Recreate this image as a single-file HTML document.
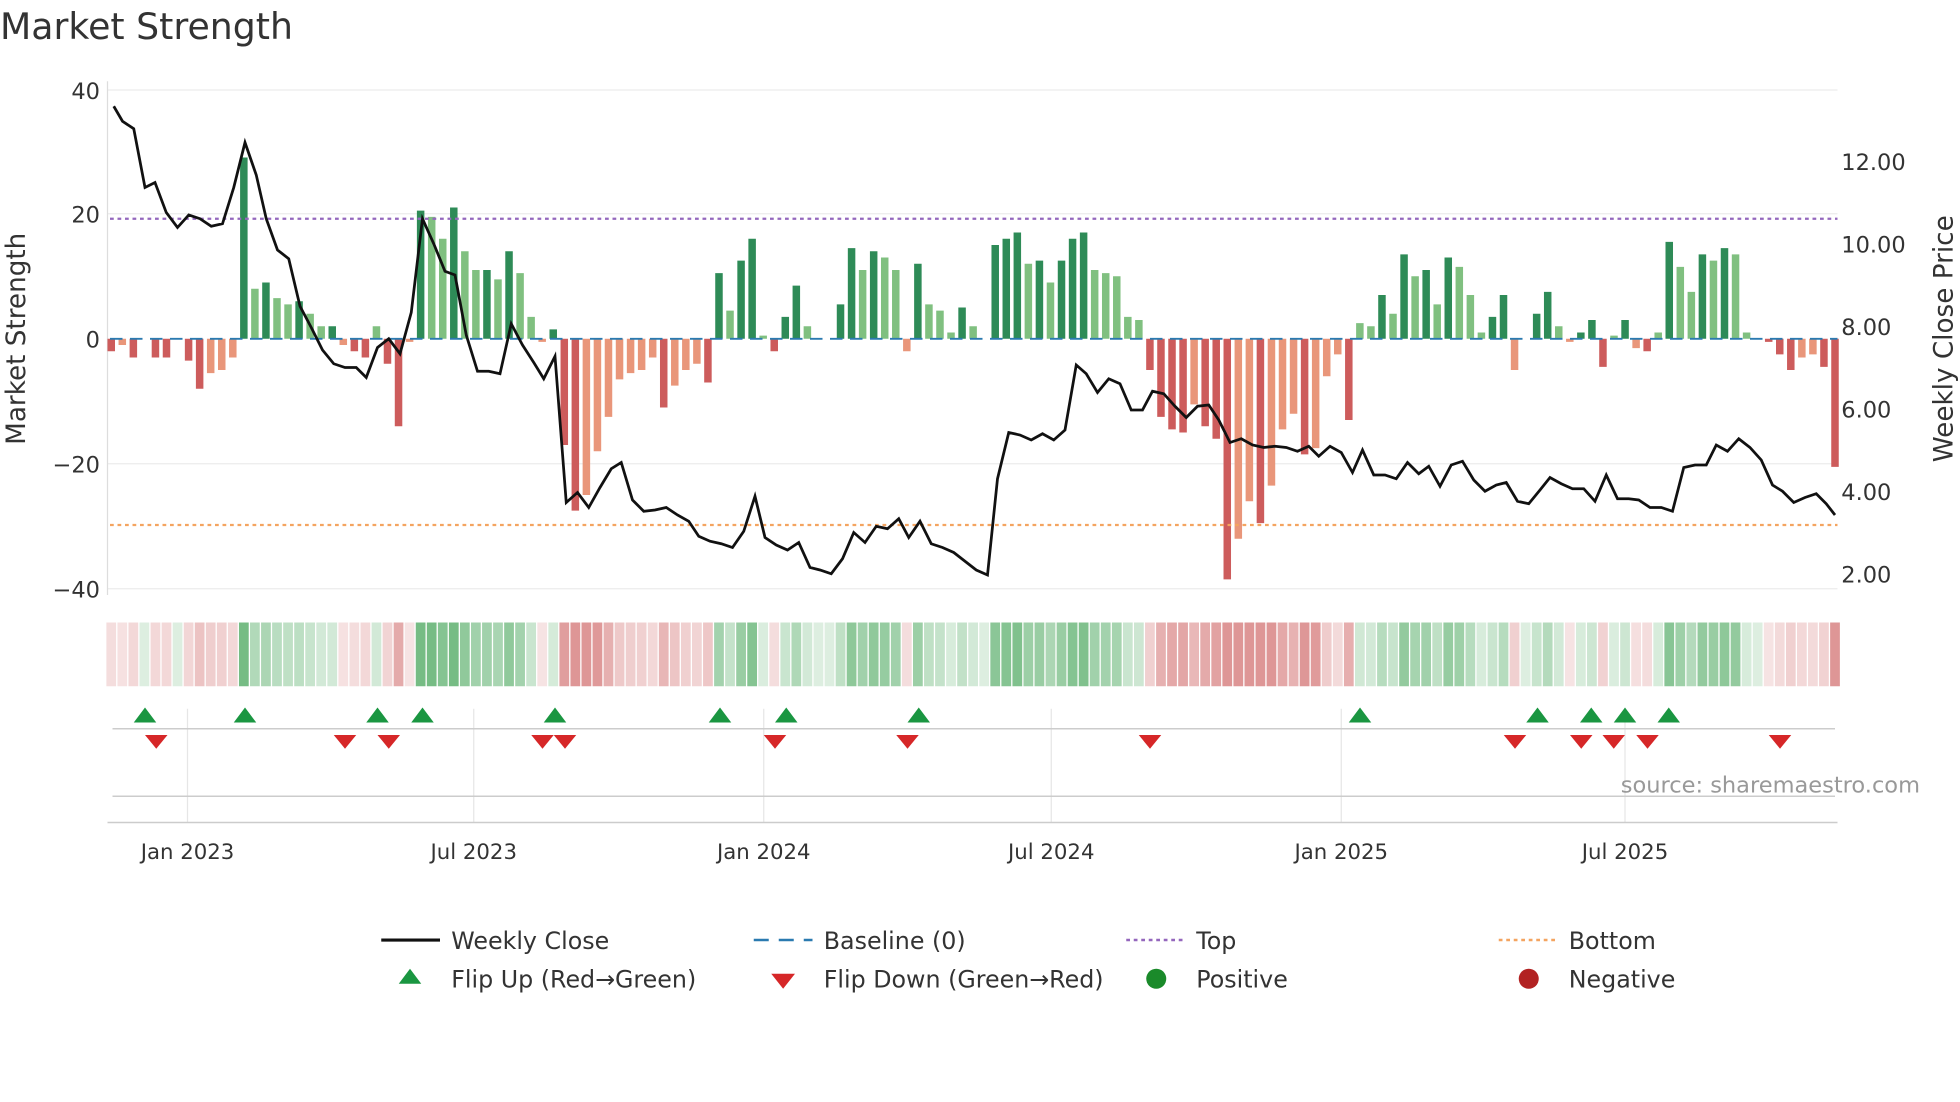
<!DOCTYPE html>
<html><head><meta charset="utf-8"><style>
html,body{margin:0;padding:0;background:#fff;width:1960px;height:1102px;overflow:hidden}
svg{display:block}
text{font-family:"DejaVu Sans","Liberation Sans",sans-serif;fill:#333}
</style></head><body>
<svg id="s" width="1960" height="1102" viewBox="0 0 1568 881.6" xmlns="http://www.w3.org/2000/svg">
<rect width="1568" height="882" fill="#fff"/>
<text x="0" y="31" font-size="29">Market Strength</text>
<g stroke="#ececec" stroke-width="1">
<line x1="86" y1="72" x2="1470" y2="72"/><line x1="86" y1="171" x2="1470" y2="171"/>
<line x1="86" y1="371" x2="1470" y2="371"/><line x1="86" y1="471" x2="1470" y2="471"/>
</g>
<line x1="86" y1="65" x2="86" y2="476" stroke="#ddd"/>
<g font-size="18" text-anchor="end">
<text x="80" y="79">40</text><text x="80" y="178">20</text><text x="80" y="278">0</text>
<text x="80" y="378">−20</text><text x="80" y="478">−40</text>
</g>
<g font-size="18">
<text x="1473" y="136">12.00</text><text x="1473" y="202">10.00</text><text x="1473" y="268">8.00</text>
<text x="1473" y="334">6.00</text><text x="1473" y="400">4.00</text><text x="1473" y="466">2.00</text>
</g>
<text transform="translate(20,271) rotate(-90)" font-size="21" text-anchor="middle">Market Strength</text>
<text transform="translate(1562,271) rotate(-90)" font-size="21" text-anchor="middle">Weekly Close Price</text>
<g id="bars"></g>
<line x1="88" y1="271" x2="1470" y2="271" stroke="#2a7ab0" stroke-width="1.5" stroke-dasharray="10,6"/>
<line x1="88" y1="175" x2="1470" y2="175" stroke="#9467bd" stroke-width="1.8" stroke-dasharray="3,3"/>
<line x1="88" y1="420" x2="1470" y2="420" stroke="#f4a460" stroke-width="1.8" stroke-dasharray="3,3"/>
<polyline id="price" fill="none" stroke="#111" stroke-width="2.2"/>
<g id="heat"></g>
<g stroke="#e6e6e6"><line x1="150" y1="567" x2="150" y2="658"/><line x1="379" y1="567" x2="379" y2="658"/><line x1="611" y1="567" x2="611" y2="658"/><line x1="841" y1="567" x2="841" y2="658"/><line x1="1073" y1="567" x2="1073" y2="658"/><line x1="1300" y1="567" x2="1300" y2="658"/></g>
<line x1="90" y1="583" x2="1468" y2="583" stroke="#ccc" stroke-width="1.2"/>
<line x1="90" y1="637" x2="1468" y2="637" stroke="#ccc" stroke-width="1.2"/>
<line x1="86" y1="658" x2="1470" y2="658" stroke="#ccc" stroke-width="1.2"/>
<g id="flips"></g>
<text x="1536" y="634" font-size="18" text-anchor="end" style="fill:#999">source: sharemaestro.com</text>
<g font-size="17" text-anchor="middle">
<text x="150" y="687">Jan 2023</text><text x="379" y="687">Jul 2023</text><text x="611" y="687">Jan 2024</text>
<text x="841" y="687">Jul 2024</text><text x="1073" y="687">Jan 2025</text><text x="1300" y="687">Jul 2025</text>
</g>
<g font-size="19">
<line x1="305" y1="752" x2="352" y2="752" stroke="#111" stroke-width="2.5"/><text x="361" y="759">Weekly Close</text>
<line x1="603" y1="752" x2="650" y2="752" stroke="#2a7ab0" stroke-width="2" stroke-dasharray="12,8"/><text x="659" y="759">Baseline (0)</text>
<line x1="901" y1="752" x2="948" y2="752" stroke="#9467bd" stroke-width="2" stroke-dasharray="3,3"/><text x="957" y="759">Top</text>
<line x1="1199" y1="752" x2="1246" y2="752" stroke="#f4a460" stroke-width="2" stroke-dasharray="3,3"/><text x="1255" y="759">Bottom</text>
<polygon points="328,775 337,787 319,787" fill="#1a9641"/><text x="361" y="790">Flip Up (Red→Green)</text>
<polygon points="617,779 636,779 626.5,791" fill="#d62728"/><text x="659" y="790">Flip Down (Green→Red)</text>
<circle cx="925" cy="783" r="8" fill="#1a8a2a"/><text x="957" y="790">Positive</text>
<circle cx="1223" cy="783" r="8" fill="#b22222"/><text x="1255" y="790">Negative</text>
</g>
</svg>
<script>
var v=[-2,-1,-3,0,-3,-3,0,-3.5,-8,-5.5,-5,-3,29,8,9,6.5,5.5,6,4,2,2,-1,-2,-3,2,-4,-14,-0.5,20.5,19.5,16,21,14,11,11,9.5,14,10.5,3.5,-0.5,1.5,-17,-27.5,-25,-18,-12.5,-6.5,-5.5,-5,-3,-11,-7.5,-5,-4,-7,10.5,4.5,12.5,16,0.5,-2,3.5,8.5,2,0,0,5.5,14.5,11,14,13,11,-2,12,5.5,4.5,1,5,2,0,15,16,17,12,12.5,9,12.5,16,17,11,10.5,10,3.5,3,-5,-12.5,-14.5,-15,-10.5,-14,-16,-38.5,-32,-26,-29.5,-23.5,-14.5,-12,-18.5,-17.5,-6,-2.5,-13,2.5,2,7,4,13.5,10,11,5.5,13,11.5,7,1,3.5,7,-5,0,4,7.5,2,-0.5,1,3,-4.5,0.5,3,-1.5,-2,1,15.5,11.5,7.5,13.5,12.5,14.5,13.5,1,0,-0.5,-2.5,-5,-3,-2.5,-4.5,-20.5];
var n=v.length,st=(1468-89)/(n-1),b='',h='';
for(var i=0;i<n;i++){var x=89+i*st,val=v[i],p=i?v[i-1]:0,strong=Math.abs(val)>=Math.abs(p);
var c=val>=0?(strong?'#2e8b57':'#80c080'):(strong?'#cd5c5c':'#e9967a');
var y=271-Math.max(val,0)*5,hh=Math.abs(val)*5;
if(hh>0)b+='<rect x="'+(x-3)+'" y="'+y+'" width="6" height="'+hh+'" fill="'+c+'"/>';
var a=Math.min(1,0.25+Math.abs(val)/25);
var hc=val>=0?'rgba(60,160,80,'+(a*0.7)+')':'rgba(200,80,80,'+(a*0.6)+')';
h+='<rect x="'+(x-3.9)+'" y="498" width="7.8" height="51" fill="'+hc+'"/>';}
document.getElementById('bars').innerHTML=b;document.getElementById('heat').innerHTML=h;
var pts="91,85 98,97 107,103 116,150 124,146 133,170 142,182 151,172 160,175 169,181 178,179 187,150 196,114 205,140 213,175 222,200 231,207 240,245 249,262 258,280 267,291 276,294 285,294 293,302 302,278 311,271 320,283 329,250 338,175 347,195 356,217 364,220 373,268 382,297 391,297 400,299 409,259 418,276 427,290 435,303 444,285 453,402 462,394 471,406 480,390 489,375 497,370 506,400 515,409 524,408 533,406 542,412 551,417 559,429 568,433 577,435 586,438 595,425 604,397 612,430 621,436 630,440 639,434 648,454 656,456 665,459 674,447 683,426 692,434 701,421 710,423 719,415 727,430 736,417 745,435 754,438 763,442 772,449 781,456 790,460 798,383 807,346 816,348 825,352 834,347 843,352 852,344 861,292 869,299 878,314 887,303 896,307 905,328 914,328 922,313 931,315 940,325 949,334 958,325 967,324 975,336 984,354 993,351 1002,356 1011,358 1020,357 1029,358 1038,361 1047,357 1055,365 1064,357 1073,362 1082,378 1090,360 1099,380 1108,380 1117,383 1126,370 1135,379 1143,373 1152,389 1161,372 1170,369 1179,384 1188,393 1197,388 1205,386 1214,401 1223,403 1232,392 1240,382 1249,387 1258,391 1267,391 1276,401 1285,380 1294,399 1303,399 1311,400 1320,406 1329,406 1338,409 1347,374 1356,372 1365,372 1373,356 1382,361 1391,351 1400,358 1409,368 1418,388 1426,393 1435,402 1444,398 1453,395 1461,403 1468,412";
document.getElementById('price').setAttribute('points',pts);
var up=[116,196,302,338,444,576,629,735,1088,1230,1273,1300,1335],dn=[125,276,311,434,452,620,726,920,1212,1265,1291,1318,1424],f='';
up.forEach(function(x){f+='<polygon points="'+x+',566 '+(x+9)+',578 '+(x-9)+',578" fill="#1a9641"/>';});
dn.forEach(function(x){f+='<polygon points="'+(x-9)+',588 '+(x+9)+',588 '+x+',599" fill="#d62728"/>';});
document.getElementById('flips').innerHTML=f;
</script>
</body></html>
